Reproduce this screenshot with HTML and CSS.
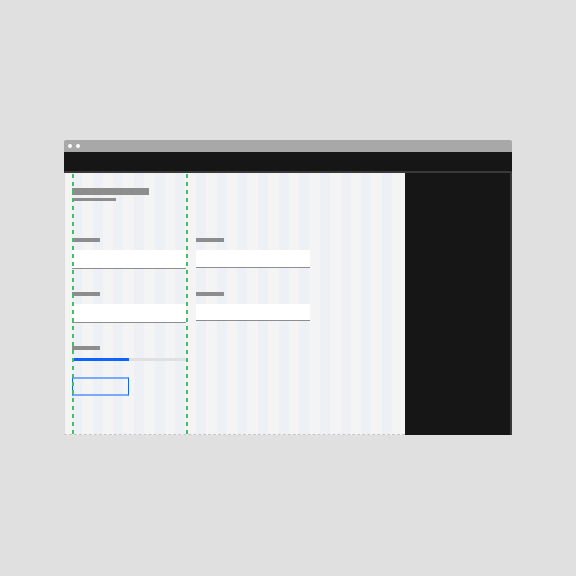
FILE: index.html
```html
<!DOCTYPE html>
<html lang="en">
<head>
<meta charset="utf-8">
<title>Form layout</title>
<link rel="stylesheet" href="styles.css">
</head>
<body>
<div class="window">
  <div class="titlebar"><span class="dot"></span><span class="dot"></span></div>
  <div class="nav"></div>
  <div class="main">
    <div class="canvas">
      <div class="heading"></div>
      <div class="subheading"></div>
      <div class="form">
        <div class="field">
          <div class="label"></div>
          <div class="input"></div>
        </div>
        <div class="field">
          <div class="label"></div>
          <div class="input short"></div>
        </div>
        <div class="field">
          <div class="label"></div>
          <div class="input"></div>
        </div>
        <div class="field">
          <div class="label"></div>
          <div class="input short2"></div>
        </div>
        <div class="field">
          <div class="label"></div>
          <div class="progress"><div class="progress-fill" style="width: 50%"></div></div>
        </div>
      </div>
      <div class="button"></div>
      <div class="guide guide-a"></div>
      <div class="guide guide-b"></div>
    </div>
    <div class="panel"></div>
  </div>
</div>
</body>
</html>
```
FILE: styles.css
```css
html, body {
  margin: 0;
  padding: 0;
  background: #e0e0e0;
  font-family: "Liberation Sans", Arial, sans-serif;
}

.window {
  margin: 140px 0 0 64px;
  width: 448px;
}

.titlebar {
  height: 12px;
  background: #a8a8a8;
  border-radius: 2px 2px 0 0;
  display: flex;
  align-items: center;
  gap: 4px;
  padding-left: 4px;
}

.dot {
  width: 4px;
  height: 4px;
  border-radius: 50%;
  background: #ffffff;
}

.nav {
  height: 19px;
  background: #161616;
  border-bottom: 2px solid #393939;
}

.main {
  display: flex;
  height: 262px;
}

.canvas {
  position: relative;
  box-sizing: border-box;
  width: 341px;
  height: 262px;
  border-left: 1px solid #dcdcdc;
  border-bottom: 1px dashed #c6c6c6;
  padding: 15px 8px 0 7px;
  background-color: #f4f4f4;
  background-image: repeating-linear-gradient(90deg, #edf0f4 0 10px, #f4f4f4 10px 20.667px);
  background-size: 330.667px 100%;
  background-position: 7px 0;
  background-repeat: no-repeat;
}

.heading {
  width: 77px;
  height: 7px;
  background: #8d8d8d;
}

.subheading {
  margin-top: 3px;
  width: 44px;
  height: 3px;
  background: #8d8d8d;
}

.form {
  margin-top: 37px;
  display: grid;
  grid-template-columns: 114px 114px;
  column-gap: 10px;
  row-gap: 23px;
  align-items: start;
}

.label {
  width: 28px;
  height: 4px;
  background: #8d8d8d;
}

.input {
  margin-top: 8px;
  height: 18px;
  background: #ffffff;
  border-bottom: 1px solid #8d8d8d;
}

.input.short {
  height: 17px;
}

.input.short2 {
  height: 16px;
}

.progress {
  margin-top: 8px;
  height: 3px;
  background: #e0e0e0;
}

.progress-fill {
  height: 100%;
  background: #0f62fe;
}

.button {
  margin-top: 16px;
  box-sizing: border-box;
  width: 57px;
  height: 19px;
  border-top: 2px solid #78a9ff;
  border-bottom: 2px solid #78a9ff;
  border-left: 1px solid #0f62fe;
  border-right: 1px solid #0f62fe;
}

.guide {
  position: absolute;
  top: 0;
  bottom: 0;
  width: 2px;
  z-index: 1;
  background: repeating-linear-gradient(180deg, transparent 0 1px, #42be65 1px 5px, transparent 5px 8px);
}

.guide-a {
  left: 7px;
}

.guide-b {
  left: 121px;
}

.panel {
  flex: 1;
  background: #161616;
  border-right: 2px solid #393939;
}
```
